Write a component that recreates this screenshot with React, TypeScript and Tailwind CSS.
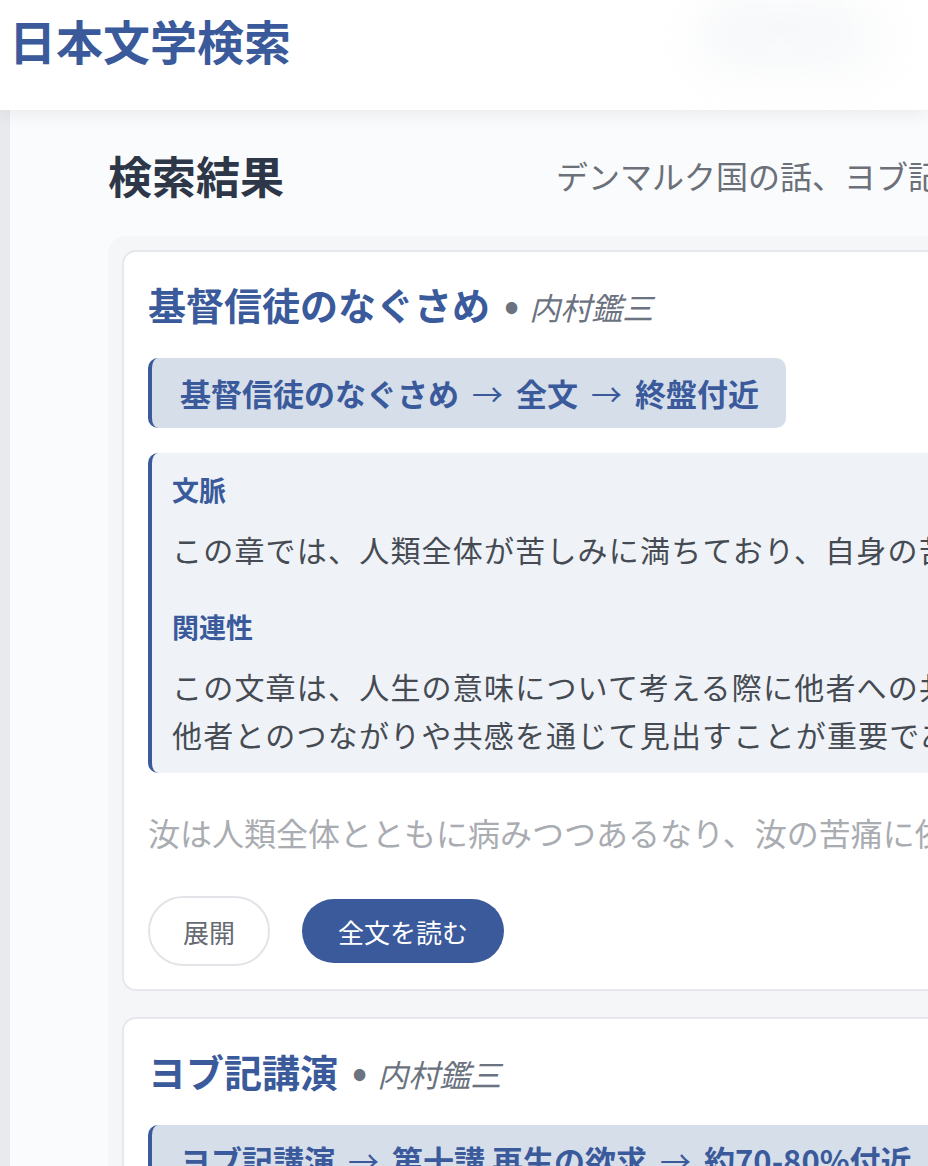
import React from 'react'

interface Result {
  title: string
  author: string
  path: string[]
  context: string
  relevance: string[]
  preview: string
}

const results: Result[] = [
  {
    title: '基督信徒のなぐさめ',
    author: '内村鑑三',
    path: ['基督信徒のなぐさめ', '全文', '終盤付近'],
    context:
      'この章では、人類全体が苦しみに満ちており、自身の苦しみもまたその一部であると説かれている。',
    relevance: [
      'この文章は、人生の意味について考える際に他者への共感が欠かせないことを示しており、人生の意味は',
      '他者とのつながりや共感を通じて見出すことが重要であるという視点を与えてくれる。',
    ],
    preview:
      '汝は人類全体とともに病みつつあるなり、汝の苦痛に依りて人類の苦痛を知り、汝の同情を広くせよ。',
  },
  {
    title: 'ヨブ記講演',
    author: '内村鑑三',
    path: ['ヨブ記講演', '第十講 再生の欲求', '約70-80%付近'],
    context: 'ヨブは苦難の中で再び生まれることを求め、神との関係の回復を願っている。',
    relevance: ['苦難を通じて人生の意味を問い直す姿勢が描かれている。'],
    preview: '人もし死なばまた生きんや、われはわが征戦の諸日の間望みおりて、わが変化の来るを待たん。',
  },
]

function ResultCard({ r }: { r: Result }) {
  return (
    <div className="rounded-[14px] border-2 border-[#e6e8eb] bg-white px-[24px] pt-[23px] pb-[23px] flex flex-col">
      <h3 className="flex items-baseline h-[56px] leading-[56px] whitespace-nowrap">
        <span className="text-[38px] font-bold text-[#3a5a9b]">{r.title}</span>
        <span className="ml-[14px] text-[40px] font-bold text-[#6b7280]">•</span>
        <span className="ml-[10px] text-[31px] italic text-[#6b7280]">{r.author}</span>
      </h3>

      <div className="mt-[27px] self-start h-[70px] flex items-center rounded-[10px] border-l-4 border-[#3a5a9b] bg-[#d6deea] pl-[28px] pr-[27px] text-[31px] font-bold text-[#3a5a9b] whitespace-nowrap">
        {r.path.map((p, i) => (
          <React.Fragment key={i}>
            {i > 0 && <span className="mx-[13px] font-normal">→</span>}
            <span>{p}</span>
          </React.Fragment>
        ))}
      </div>

      <div className="mt-[25px] rounded-[10px] border-l-4 border-[#3a5a9b] bg-[#eff3f8] pl-[20px] pr-[24px] pt-[17px] pb-[15px]">
        <div className="text-[27px] leading-[40px] font-bold text-[#3a5a9b]">文脈</div>
        <p className="mt-[15px] text-[30px] leading-[48px] tracking-[0.04em] text-[#464b53] whitespace-nowrap">
          {r.context}
        </p>
        <div className="mt-[34px] text-[27px] leading-[40px] font-bold text-[#3a5a9b]">関連性</div>
        <p className="mt-[15px] text-[30px] leading-[48px] tracking-[0.04em] text-[#464b53] whitespace-nowrap">
          {r.relevance.map((line, i) => (
            <React.Fragment key={i}>
              {i > 0 && <br />}
              {line}
            </React.Fragment>
          ))}
        </p>
      </div>

      <p className="mt-[34px] text-[32px] leading-[51px] text-[#a9acb1] whitespace-nowrap overflow-hidden">
        {r.preview}
      </p>

      <div className="mt-[38px] flex items-center gap-[32px]">
        <button className="h-[70px] px-[33px] rounded-full border-2 border-[#e2e4e8] bg-white text-[26px] text-[#666b73]">
          展開
        </button>
        <button className="h-[64px] px-[36px] rounded-full bg-[#3a5a9b] text-[26px] text-white">
          全文を読む
        </button>
      </div>
    </div>
  )
}

export default function App() {
  return (
    <div className="w-[928px] h-[1166px] overflow-hidden bg-[#e8eaed] font-['Noto_Sans_CJK_JP','Noto_Sans',sans-serif]">
      <header className="relative z-10 h-[110px] bg-white shadow-[0_6px_16px_rgba(0,0,0,0.06)] px-[9px] pt-[17px] overflow-hidden">
        <h1 className="text-[47px] leading-[46px] font-bold text-[#3a5a9b]">日本文学検索</h1>
        <div className="absolute left-[690px] top-[0px] w-[200px] h-[78px] rounded-full bg-[#f9fafb] blur-xl" />
        <div className="absolute left-[720px] top-[8px] w-[120px] h-[40px] rounded-full bg-[#f7f8fa] blur-lg" />
      </header>

      <main className="ml-[10px] h-[1056px] bg-[#fafbfc] pl-[98px]">
        <div className="h-[126px] pt-[4px] flex items-center whitespace-nowrap">
          <h2 className="text-[44px] font-bold text-[#2d3748]">検索結果</h2>
          <p className="ml-[272px] text-[32px] text-[#6b7079]">デンマルク国の話、ヨブ記講演、基督信徒のなぐさめ</p>
        </div>

        <div className="w-[1400px] rounded-[18px] bg-[#f4f6f8] p-[14px] flex flex-col gap-[26px]">
          {results.map((r) => (
            <ResultCard key={r.title} r={r} />
          ))}
        </div>
      </main>
    </div>
  )
}
